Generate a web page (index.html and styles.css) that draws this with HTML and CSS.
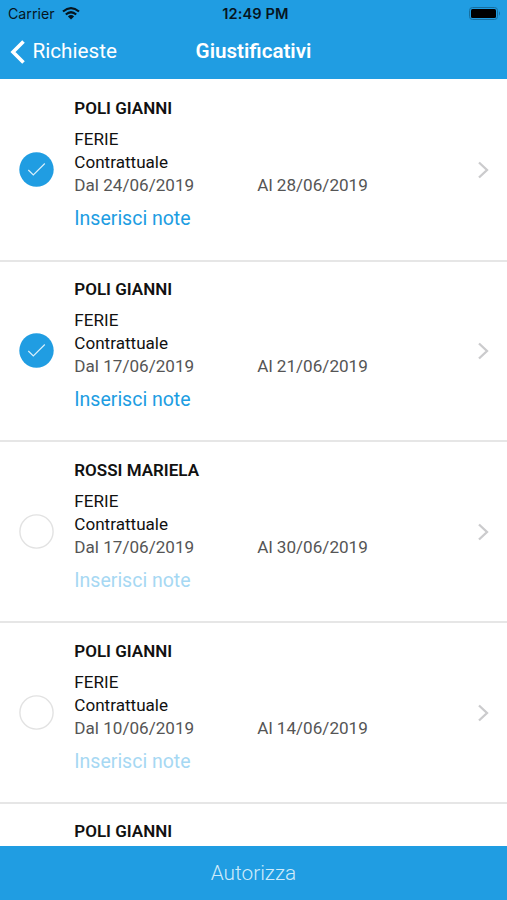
FILE: index.html
```html
<!DOCTYPE html>
<html lang="it">
<head>
<meta charset="utf-8">
<title>Giustificativi</title>
<link rel="stylesheet" href="styles.css">
</head>
<body>
<div class="app">
<header class="header">
<div class="status">
<div class="carrier"><span>Carrier</span><svg class="wifi" viewBox="0 0 18 13"><path d="M1 4.5Q9-2.2 17 4.5M3.8 7.5Q9 3 14.2 7.5" fill="none" stroke="#06151e" stroke-width="2.2"/><path d="M5.9 9.4Q9 6.8 12.1 9.4L9 12.6Z" fill="#06151e"/></svg></div>
<div class="time">12:49 PM</div>
<svg class="battery" viewBox="0 0 32 13"><rect x=".5" y=".5" width="28" height="12" rx="3" fill="none" stroke="#176f9f"/><rect x="2" y="2" width="25" height="9" rx="1.5"/><path d="M30 4.3Q32 6.5 30 8.7Z" fill="#176f9f"/></svg>
</div>
<div class="nav">
<div class="back"><svg class="back-icon" viewBox="0 0 15 24"><path d="M13.5 1.5L3 12L13.5 22.5" fill="none" stroke="#fff" stroke-width="3.6"/></svg><span>Richieste</span></div>
<h1 class="title">Giustificativi</h1>
</div>
</header>
<main class="list" id="list"></main>
<footer class="footer">Autorizza</footer>
</div>
<script src="app.js"></script>
</body>
</html>
```
FILE: styles.css
```css
* { box-sizing: border-box; }
body { margin: 0; font-family: Roboto, "Liberation Sans", sans-serif; }
.app { width: 507px; height: 900px; display: flex; flex-direction: column; overflow: hidden; background: #fff; }
.header { flex: 0 0 79.4px; background: #209de2; }
.status { height: 27px; display: grid; grid-template-columns: 1fr auto 1fr; align-items: center; padding: 0 6px 0 8px; font-family: Inter, sans-serif; font-size: 14.2px; color: #06151e; }
.carrier { display: flex; align-items: center; gap: 7px; }
.wifi { width: 18px; height: 13px; }
.time { padding-left: 2px; font-weight: 600; font-size: 14.6px; letter-spacing: .1px; }
.battery { width: 32px; height: 13px; justify-self: end; }
.nav { height: 49px; display: grid; grid-template-columns: 1fr auto 1fr; align-items: center; padding: 0 9.5px; color: #fff; }
.back { display: flex; align-items: center; gap: 8px; font-size: 20.7px; }
.back span, .title { padding-bottom: 2px; }
.back-icon { width: 15px; height: 24px; }
.title { margin: 0; font-size: 20.6px; font-weight: 600; }
.list { flex: 1; min-height: 0; padding-top: 1.6px; overflow: hidden; }
.row { height: 180.75px; display: grid; grid-template-columns: 74.3px 1fr 32px; border-bottom: 2px solid #e6e6e6; }
.row:last-child { height: auto; border: 0; }
.check { align-self: center; margin: 0 0 1px 18.8px; width: 35px; height: 35px; }
.content { padding-top: 16.4px; font-size: 17.1px; line-height: 23px; color: #111; }
.name { font-size: 17px; font-weight: 600; margin-bottom: 8px; }
.row:last-child .name { margin: 0; }
.dates { display: grid; grid-template-columns: 183px 1fr; color: #555; }
.note { margin-top: 10px; font-size: 19.5px; color: #209de2; }
.note.off { color: #a6d8f3; }
.chevron { align-self: center; width: 12px; height: 20px; margin-left: 2px; }
.footer { flex: 0 0 54px; display: flex; align-items: center; justify-content: center; padding-bottom: 1px; background: #209de2; color: #cfebfa; font-size: 20.8px; font-weight: 300; }
```
FILE: app.js
```js
const requests = [
  ["POLI GIANNI", "24/06/2019", "28/06/2019", true],
  ["POLI GIANNI", "17/06/2019", "21/06/2019", true],
  ["ROSSI MARIELA", "17/06/2019", "30/06/2019", false],
  ["POLI GIANNI", "10/06/2019", "14/06/2019", false]
];
const rows = requests.map(([name, from, to, on]) => `
<section class="row">
<svg class="check" viewBox="0 0 35 35">${on ? '<circle cx="17.5" cy="17.5" r="17.2" fill="#209de2"/><path d="M9.3 18L14.3 23L25.8 11.5" fill="none" stroke="#d8effb" stroke-width="1.2"/>' : '<circle cx="17.5" cy="17.5" r="16.6" fill="#fff" stroke="#e2e2e2" stroke-width="1.4"/>'}</svg>
<div class="content">
<div class="name">${name}</div>
<div>FERIE</div>
<div>Contrattuale</div>
<div class="dates"><span>Dal ${from}</span><span>Al ${to}</span></div>
<div class="note${on ? "" : " off"}">Inserisci note</div>
</div>
<svg class="chevron" viewBox="0 0 12 20"><path d="M2 2.5L10 10L2 17.5" fill="none" stroke="#cbcbcd" stroke-width="2.3"/></svg>
</section>`);
rows.push('<section class="row"><span></span><div class="content"><div class="name">POLI GIANNI</div></div></section>');
document.getElementById("list").innerHTML = rows.join("");
```
